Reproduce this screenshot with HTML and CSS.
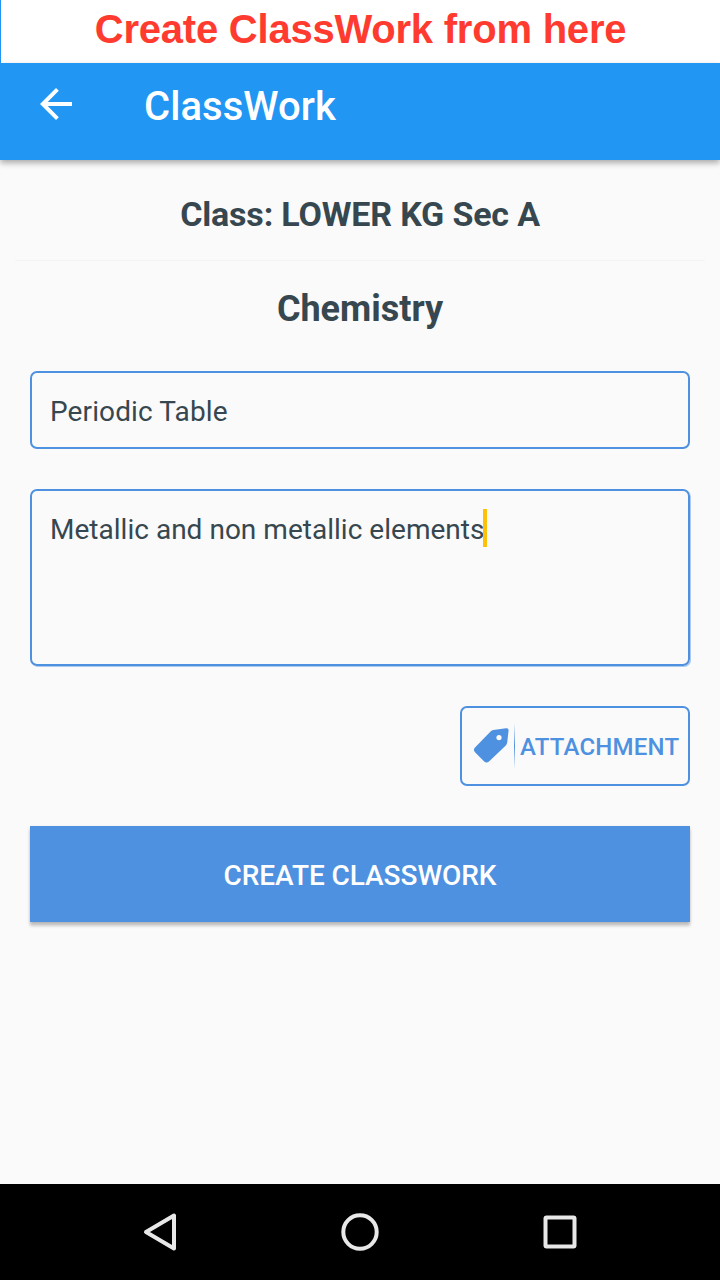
FILE: index.html
```
<!DOCTYPE html>
<html lang="en">
<head>
<meta charset="utf-8">
<title>ClassWork</title>
<link rel="stylesheet" href="styles.css">
</head>
<body>
<div class="screen">
  <div class="banner">Create ClassWork from here</div>
  <header class="appbar">
    <svg class="back" width="32" height="32" viewBox="0 0 32 32"><path d="M32 14H7.700L18.800 2.800 16 0 0 16l16 16 2.800-2.800L7.700 18H32z" fill="#fff"/></svg>
    <h1 class="title"><span>ClassWork</span></h1>
  </header>
  <main class="content">
    <h2 class="class-name"><span>Class: LOWER KG Sec A</span></h2>
    <h2 class="subject"><span>Chemistry</span></h2>
    <div class="field topic">Periodic Table</div>
    <div class="field details"><span>Metallic and non metallic elements</span><i class="caret"></i></div>
    <button class="attachment">
      <svg class="tag" width="36" height="36" viewBox="0 0 36 36"><path fill-rule="evenodd" d="M16.800 3.300Q17.800 2.300 19.200 2.100L32 .2Q34.800-.2 34.600 2.600L33.200 14.500Q33 16.200 31.800 17.400L15 33.500Q12.500 35.600 10.200 33.500L1 24.300Q-1.200 21.900 1 19.500ZM25 7a2.600 2.600 0 1 0 0 5.200A2.600 2.600 0 0 0 25 7Z" fill="#4e91e0"/></svg>
      <i class="rule"></i>
      <span>ATTACHMENT</span>
    </button>
    <button class="create">CREATE CLASSWORK</button>
  </main>
  <nav class="navbar">
    <svg width="40" height="40" viewBox="0 0 40 40"><path d="M6 20 34 3.500v33z"/></svg>
    <svg width="40" height="40" viewBox="0 0 40 40"><circle cx="20" cy="20" r="16.700"/></svg>
    <svg width="40" height="40" viewBox="0 0 40 40"><rect x="5.500" y="5.500" width="29" height="29" rx="1"/></svg>
  </nav>
</div>
</body>
</html>
```
FILE: styles.css
```
* { box-sizing: border-box; }
body { margin: 0; font-family: Roboto, sans-serif; color: #37474f; }
h1, h2 { margin: 0; }
.screen { width: 720px; height: 1280px; display: flex; flex-direction: column; background: #fafafa; overflow: hidden; }
.banner { height: 63px; background: #fff; border-left: 1px solid #2196f3; color: #ff3b30; font: bold 40px/58px "Liberation Sans", sans-serif; letter-spacing: -.22px; text-align: center; }
.appbar { height: 97px; display: flex; background: #2196f3; box-shadow: 0 3px 6px rgba(0,0,0,.32); padding: 25px 40px 0; }
.title { margin-left: 72px; color: #fff; font-size: 40px; font-weight: 500; line-height: 38px; letter-spacing: .05px; }
.content { flex: 1; display: flex; flex-direction: column; }
.class-name { height: 101px; margin: 0 15px; border-bottom: 1px solid #f4f4f4; text-align: center; font-size: 34px; line-height: 108px; letter-spacing: -.17px; }
.subject { height: 110px; font-size: 36px; line-height: 96px; text-align: center; }
.field { margin: 0 30px; border: 2px solid #4e91e0; border-radius: 7px; padding: 18px; font-size: 28px; line-height: 42px; white-space: nowrap; }
.topic { height: 78px; letter-spacing: .12px; }
.details { height: 177px; margin-top: 40px; display: flex; letter-spacing: .02px; box-shadow: 1px 1px 0 rgba(78,145,224,.45); }
.caret { width: 4px; height: 38px; background: #ffc107; margin-left: -1px; }
button { font-family: inherit; font-weight: 500; }
.attachment { width: 230px; height: 80px; margin: 40px 30px 0 auto; border: 2px solid #4e91e0; border-radius: 7px; padding: 0 0 0 12px; background: #fafafa; color: #4e91e0; display: flex; align-items: center; font-size: 24px; line-height: 28px; letter-spacing: .22px; white-space: nowrap; }
.attachment span { padding-top: 2px; }
.rule { width: 1px; height: 46px; background: linear-gradient(transparent, #4e91e0 50%, transparent); margin: 0 5px 0 4px; }
.create { height: 96px; margin: 40px 30px 0; border: 0; background: #4e91e0; color: #fff; font-size: 28px; line-height: 100px; letter-spacing: -.06px; padding: 0; box-shadow: 0 4px 3px rgba(0,0,0,.2), 0 1px 3px rgba(0,0,0,.12); }
.navbar { height: 96px; background: #000; display: flex; justify-content: center; align-items: center; gap: 160px; }
.navbar svg { fill: none; stroke: #e8e8e8; stroke-width: 4; stroke-linejoin: round; }
```
